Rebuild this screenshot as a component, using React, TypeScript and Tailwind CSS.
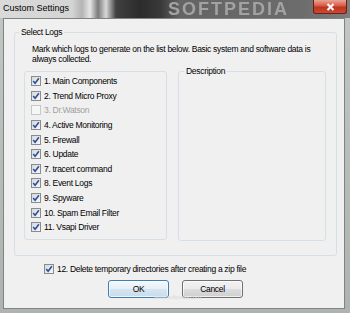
import React from "react";

const FONT = { fontFamily: '"Liberation Sans", Arial, sans-serif' };

function Check({ checked = true, disabled = false }: { checked?: boolean; disabled?: boolean }) {
  return (
    <span
      className={
        disabled
          ? "flex h-[10px] w-[10px] shrink-0 items-center justify-center border border-[#c6c8ca] bg-[#f6f6f6]"
          : "flex h-[10px] w-[10px] shrink-0 items-center justify-center border border-[#8a8d90] bg-[linear-gradient(135deg,#d6d8da,#f7f7f7)]"
      }
    >
      {checked && (
        <svg width="8" height="8" viewBox="0 0 8 8">
          <path d="M1.2 4.1 L3.1 6.3 L6.9 1.2" fill="none" stroke="#2a4c9e" strokeWidth="1.5" />
        </svg>
      )}
    </span>
  );
}

const items: { label: string; checked: boolean; disabled?: boolean }[] = [
  { label: "1. Main Components", checked: true },
  { label: "2. Trend Micro Proxy", checked: true },
  { label: "3. Dr.Watson", checked: false, disabled: true },
  { label: "4. Active Monitoring", checked: true },
  { label: "5. Firewall", checked: true },
  { label: "6. Update", checked: true },
  { label: "7. tracert command", checked: true },
  { label: "8. Event Logs", checked: true },
  { label: "9. Spyware", checked: true },
  { label: "10. Spam Email Filter", checked: true },
  { label: "11. Vsapi Driver", checked: true },
];

export default function App() {
  return (
    <div
      className="relative flex h-[313px] w-[350px] flex-col overflow-hidden bg-[linear-gradient(180deg,#c2c6c4,#aeb3b0)] text-black"
      style={FONT}
    >
      {/* Title bar */}
      <div className="relative flex h-[18px] shrink-0 items-start bg-[linear-gradient(90deg,#dadada_0px,#d4d4d4_72px,#b4b4b4_82px,#e6e6e6_90px,#7a7a7a_98px,#d8d8d8_106px,#404040_116px,#2c2c2c_140px,#383838_160px,#646464_180px,#6c6c6c_300px,#7e7e7e_350px)]">
        <span className="ml-[3px] mt-[3px] text-[9px] leading-[11px] text-black">Custom Settings</span>
        <span className="pointer-events-none absolute left-[168px] top-[1px] text-[18px] font-bold leading-[17px] tracking-[2px] text-[#a2a2a2] blur-[0.7px]">
          SOFTPEDIA
        </span>
        <div className="relative ml-auto mr-[3px] flex h-[14px] w-[34px] items-center justify-center rounded-b-[3px] border border-t-0 border-[#6a2014] bg-[linear-gradient(180deg,#e9a595_0%,#d65a44_45%,#bd3420_55%,#cc4a32_100%)]">
          <svg width="9" height="8" viewBox="0 0 9 8">
            <path d="M1.5 1 L7.5 7 M7.5 1 L1.5 7" stroke="#ffffff" strokeWidth="2" />
          </svg>
        </div>
      </div>

      {/* Client area */}
      <div className="relative mb-[4px] ml-[3px] mr-[5px] flex flex-1 flex-col border border-[#7c8582] bg-[#f0f0f0] tracking-[-0.3px]">
        <fieldset className="ml-[10px] mt-[8px] w-[323px] rounded-[3px] border border-[#d5dfe5] pb-[14px]">
          <legend className="ml-[4px] px-[2px] text-[8.5px] leading-[11px]">Select Logs</legend>
          <div className="ml-[17px] pt-[7px] text-[8.5px] leading-[9.5px]">
            Mark which logs to generate on the list below. Basic system and software data is
            <br />
            always collected.
          </div>
          <div className="mt-[2px] flex items-start">
            <div className="ml-[9px] mt-[5px] h-[169px] w-[143px] rounded-[3px] border border-[#d5dfe5] pl-[6px] pt-[2px]">
              {items.map((it) => (
                <div key={it.label} className="flex h-[14.6px] items-center gap-[3px]">
                  <Check checked={it.checked} disabled={it.disabled} />
                  <span
                    className={
                      it.disabled
                        ? "text-[8.5px] leading-[10px] text-[#a0a0a0]"
                        : "text-[8.5px] leading-[10px] text-black"
                    }
                  >
                    {it.label}
                  </span>
                </div>
              ))}
            </div>
            <fieldset className="ml-[11px] h-[175px] w-[148px] rounded-[3px] border border-[#d5dfe5]">
              <legend className="ml-[5px] px-[2px] text-[8.5px] leading-[11px]">Description</legend>
            </fieldset>
          </div>
        </fieldset>

        <div className="ml-[40px] mt-[6px] flex h-[14.6px] items-center gap-[3px]">
          <Check checked />
          <span className="text-[8.5px] leading-[10px]">12. Delete temporary directories after creating a zip file</span>
        </div>

        <div className="mt-[3px] flex justify-center gap-[13px] pl-[3px]">
          <button className="flex h-[18px] w-[61px] items-center justify-center rounded-[3px] border border-[#3c7fb1] bg-[linear-gradient(180deg,#f4f8fb_0%,#e6eff6_50%,#d6e5f0_50%,#c9dcea_100%)] text-[8.5px] leading-[10px] shadow-[inset_0_0_0_1px_#ffffffb0]">
            OK
          </button>
          <button className="flex h-[18px] w-[61px] items-center justify-center rounded-[3px] border border-[#707070] bg-[linear-gradient(180deg,#f2f2f2_0%,#ebebeb_50%,#dddddd_50%,#cfcfcf_100%)] text-[8.5px] leading-[10px] shadow-[inset_0_0_0_1px_#ffffffb0]">
            Cancel
          </button>
        </div>

        <span className="pointer-events-none absolute left-[150px] top-[275px] text-[6px] leading-[7px] text-[#dadada]">
          www.softpedia.com
        </span>
      </div>
    </div>
  );
}
